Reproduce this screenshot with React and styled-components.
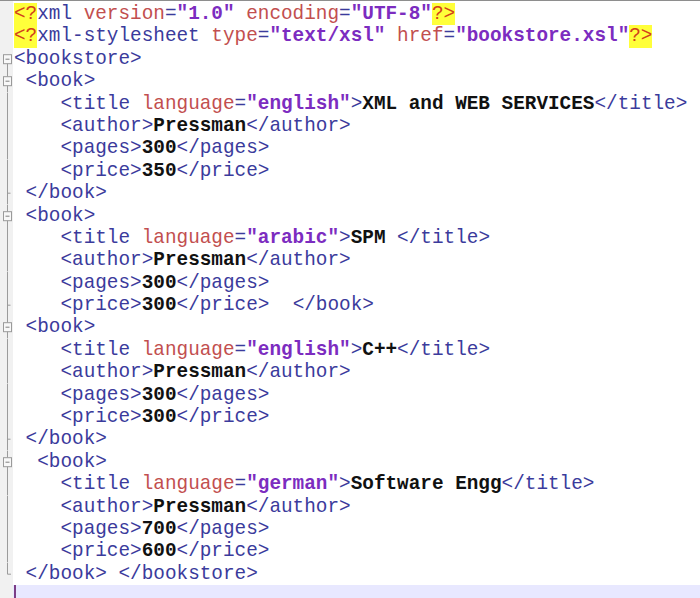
import React from "react"
import styled, { createGlobalStyle } from 'styled-components'

const GlobalStyle = createGlobalStyle`
	html, body {
		margin: 0;
		padding: 0;
		background: #ffffff;
		overflow: hidden;
	}
`

const Editor = styled.div`
	display: flex;
	flex-direction: column;
	width: 700px;
	height: 598px;
	border-top: 1px solid #8e8e8e;
	padding-top: 2px;
	box-sizing: border-box;
	background: linear-gradient(to right, #f1f1f1 13px, #ffffff 13px);
	overflow: hidden;
`
const Row = styled.div`
	display: flex;
	flex-direction: row;
	height: 22.4px;
	flex: none;
	${p => p.$current && `
		flex: 1;
		height: auto;
	`}
`
const Gutter = styled.div`
	width: 13px;
	flex: none;
	background: #f1f1f1;
	display: flex;
	svg {
		display: block;
	}
`
const Code = styled.div`
	flex: 1;
	padding-left: 1px;
	font-family: "Liberation Mono", "Courier New", monospace;
	font-size: 19.35px;
	line-height: 22.4px;
	white-space: pre;
	color: #3b3b9c;
	background: ${p => p.$current ? '#e8e8ff' : 'transparent'};
`
const Caret = styled.span`
	display: inline-block;
	width: 2px;
	height: 100%;
	background: #7b3d86;
	vertical-align: top;
`
const Tag = styled.span`
	color: #3b3b9c;
`
const Attr = styled.span`
	color: #c24f4f;
`
const Value = styled.span`
	color: #7c2cc0;
	font-weight: bold;
`
const Content = styled.span`
	color: #111111;
	font-weight: bold;
`
const Pi = styled.span`
	display: inline-block;
	line-height: 22.4px;
	color: #d2401a;
	background: #ffff3a;
`

const kinds = { tag: Tag, attr: Attr, val: Value, text: Content, pi: Pi, sp: 'span' }

// splits one line of xml into coloured pieces
function tokenize(line) {
	const out = []
	let i = 0
	let inTag = false
	while (i < line.length) {
		const rest = line.slice(i)
		if (rest.startsWith('<?')) {
			out.push(['pi', '<?'])
			i += 2
			const m = line.slice(i).match(/^[^\s?>]+/)
			if (m) { out.push(['tag', m[0]]); i += m[0].length }
			inTag = true
		} else if (rest.startsWith('?>')) {
			out.push(['pi', '?>'])
			i += 2
			inTag = false
		} else if (rest[0] === '<') {
			const m = rest.match(/^<\/?[^\s>]*/)
			out.push(['tag', m[0]])
			i += m[0].length
			inTag = true
		} else if (inTag) {
			const c = rest[0]
			if (c === '>' || c === '=') { out.push(['tag', c]); i++; if (c === '>') inTag = false }
			else if (c === ' ') { out.push(['sp', ' ']); i++ }
			else if (c === '"') {
				const end = rest.indexOf('"', 1)
				out.push(['val', rest.slice(0, end + 1)])
				i += end + 1
			} else {
				const m = rest.match(/^[^\s=>?]+/)
				out.push(['attr', m[0]])
				i += m[0].length
			}
		} else {
			const m = rest.match(/^[^<]+/)
			const lead = m[0].match(/^ */)[0]
			if (lead) out.push(['sp', lead])
			if (m[0].length > lead.length) out.push(['text', m[0].slice(lead.length)])
			i += m[0].length
		}
	}
	return out
}

const lines = [
	['none', '<?xml version="1.0" encoding="UTF-8"?>'],
	['none', '<?xml-stylesheet type="text/xsl" href="bookstore.xsl"?>'],
	['first', '<bookstore>'],
	['open', ' <book>'],
	['line', '    <title language="english">XML and WEB SERVICES</title>'],
	['line', '    <author>Pressman</author>'],
	['line', '    <pages>300</pages>'],
	['line', '    <price>350</price>'],
	['tick', ' </book>'],
	['open', ' <book>'],
	['line', '    <title language="arabic">SPM </title>'],
	['line', '    <author>Pressman</author>'],
	['line', '    <pages>300</pages>'],
	['tick', '    <price>300</price>  </book>'],
	['open', ' <book>'],
	['line', '    <title language="english">C++</title>'],
	['line', '    <author>Pressman</author>'],
	['line', '    <pages>300</pages>'],
	['line', '    <price>300</price>'],
	['tick', ' </book>'],
	['open', '  <book>'],
	['line', '    <title language="german">Software Engg</title>'],
	['line', '    <author>Pressman</author>'],
	['line', '    <pages>700</pages>'],
	['line', '    <price>600</price>'],
	['end', ' </book> </bookstore>'],
]

function FoldMark({ type }) {
	const h = 22.4
	const c = h / 2
	const stroke = '#9a9a9a'
	if (type === 'none') return null
	return (
		<svg width="13" height={h} viewBox={`0 0 13 ${h}`}>
			{(type === 'line' || type === 'tick' || type === 'open') &&
				<line x1="7.5" y1="0" x2="7.5" y2={type === 'open' ? c - 4.5 : h} stroke={stroke} strokeWidth="1" />}
			{(type === 'open' || type === 'first') && <>
				<rect x="3.5" y={c - 4.5} width="8" height="9" fill="#f8f8f8" stroke={stroke} strokeWidth="1" />
				<line x1="5.5" y1={c} x2="9.5" y2={c} stroke="#808080" strokeWidth="1" />
				<line x1="7.5" y1={c + 4.5} x2="7.5" y2={h} stroke={stroke} strokeWidth="1" />
			</>}
			{type === 'tick' && <line x1="7.5" y1={c} x2="10.5" y2={c} stroke={stroke} strokeWidth="1" />}
			{type === 'end' && <path d={`M7.5 0 V${c} H11`} fill="none" stroke={stroke} strokeWidth="1" />}
		</svg>
	)
}

class App extends React.Component {
	render() {
		return (
			<>
				<GlobalStyle />
				<Editor>
					{lines.map(([fold, text], n) => (
						<Row key={n}>
							<Gutter><FoldMark type={fold} /></Gutter>
							<Code>
								{tokenize(text).map(([kind, t], k) => {
									const Piece = kinds[kind]
									return <Piece key={k}>{t}</Piece>
								})}
							</Code>
						</Row>
					))}
					<Row $current>
						<Gutter />
						<Code $current><Caret /></Code>
					</Row>
				</Editor>
			</>
		)
	}
}

export default App
